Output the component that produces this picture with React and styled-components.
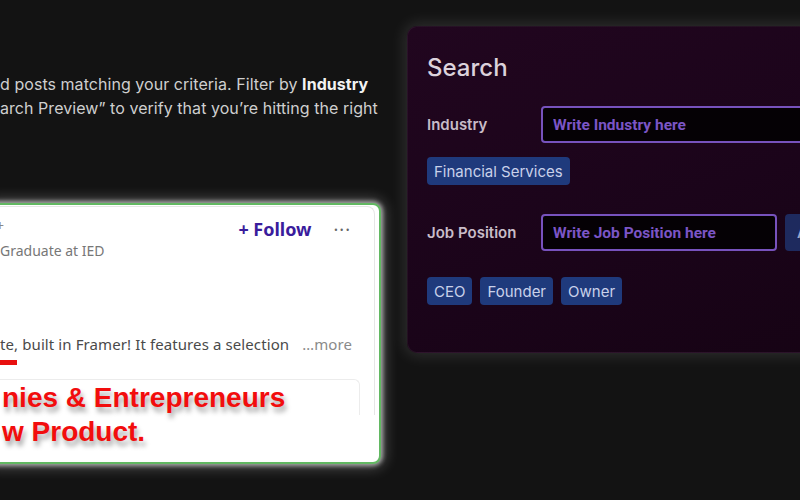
import React from 'react'
import styled, {createGlobalStyle} from 'styled-components'

const GlobalStyle = createGlobalStyle`
  html, body {
    margin: 0;
    padding: 0;
    background: #131313;
  }
  body {
    font-family: Inter, "Noto Sans", sans-serif;
  }
`

export default function App() {
  const industries = ['Financial Services']
  const positions = ['CEO', 'Founder', 'Owner']

  return (
    <Page>
      <GlobalStyle />
      <LeftColumn>
        <Intro>
          <span>d posts matching your criteria. Filter by <b>Industry</b></span>
          <span>arch Preview” to verify that you’re hitting the right</span>
        </Intro>

        <Card>
          <Post>
            <PostHeader>
              <Author>
                <div className='name'>+</div>
                <div className='headline'>Graduate at IED</div>
              </Author>
              <Actions>
                <FollowButton>+ Follow</FollowButton>
                <MoreDots>···</MoreDots>
              </Actions>
            </PostHeader>
            <PostBody>
              <span>te, built in Framer! It features a selection</span>
              <span className='more'>…more</span>
            </PostBody>
            <Underline />
            <Preview />
          </Post>
          <Callout>
            <div>nies &amp; Entrepreneurs</div>
            <div>w Product.</div>
          </Callout>
        </Card>
      </LeftColumn>

      <Panel>
        <PanelTitle>Search</PanelTitle>
        <FieldRow>
          <Label>Industry</Label>
          <TextInput placeholder='Write Industry here' />
        </FieldRow>
        <ChipList>
          {industries.map(item => <Chip key={item}>{item}</Chip>)}
        </ChipList>

        <FieldRow $gap={29}>
          <Label>Job Position</Label>
          <TextInput $width={236} placeholder='Write Job Position here' />
          <AddButton>Add</AddButton>
        </FieldRow>
        <ChipList $gap={26}>
          {positions.map(item => <Chip key={item}>{item}</Chip>)}
        </ChipList>
      </Panel>
    </Page>
  )
}

const Page = styled.div`
  display: flex;
  align-items: flex-start;
  gap: 26px;
  width: 800px;
  height: 500px;
  overflow: hidden;
`

const LeftColumn = styled.div`
  flex: 0 0 381px;
  display: flex;
  flex-direction: column;
  padding-top: 72px;
`

const Intro = styled.p`
  margin: 0;
  display: flex;
  flex-direction: column;
  font-size: 16px;
  line-height: 24px;
  color: #cfcfcf;
  white-space: nowrap;
  letter-spacing: 0.05px;
  b {
    color: #f2f2f2;
    font-weight: 700;
  }
`

const Card = styled.div`
  position: relative;
  margin-top: 83px;
  margin-left: -12px;
  height: 256px;
  border: 2px solid #62b862;
  border-radius: 8px;
  background: #fff;
  box-shadow: 0 0 4px 2px rgba(255, 255, 255, 0.55), 0 0 14px 4px rgba(255, 255, 255, 0.25);
  padding: 1px 4px 0 0;
  display: flex;
  flex-direction: column;
`

const Post = styled.div`
  height: 208px;
  display: flex;
  flex-direction: column;
  padding-left: 10px;
  border-top: 1px solid #e6e6e6;
  border-right: 1px solid #e6e6e6;
  border-top-right-radius: 8px;
  font-family: "Noto Sans", "Open Sans", sans-serif;
`

const PostHeader = styled.div`
  display: flex;
  justify-content: space-between;
  align-items: flex-start;
  padding: 9px 23px 0 0;
`

const Author = styled.div`
  display: flex;
  flex-direction: column;
  gap: 5px;
  font-size: 14px;
  line-height: 20px;
  color: #777;
  .name {
    color: #888;
    margin-left: -4px;
  }
`

const Actions = styled.div`
  display: flex;
  align-items: center;
  gap: 22px;
  margin-top: 1px;
`

const FollowButton = styled.div`
  font-size: 18px;
  line-height: 24px;
  font-weight: 700;
  color: #3a1c9c;
`

const MoreDots = styled.div`
  font-size: 18px;
  line-height: 24px;
  color: #666;
  letter-spacing: 1px;
`

const PostBody = styled.div`
  display: flex;
  justify-content: space-between;
  margin-top: 72px;
  padding-right: 22px;
  font-size: 15px;
  line-height: 22px;
  color: #4a4a4a;
  white-space: nowrap;
  letter-spacing: 0.1px;
  .more {
    color: #8a8a8a;
  }
`

const Underline = styled.div`
  margin-top: 5px;
  width: 17px;
  height: 5px;
  background: #e8100f;
`

const Preview = styled.div`
  flex: 1;
  margin: 14px 14px 0 -10px;
  border-top: 1px solid #ececec;
  border-right: 1px solid #ececec;
  border-top-right-radius: 6px;
`

const Callout = styled.div`
  position: absolute;
  left: 12px;
  top: 176px;
  font-family: "Liberation Sans", Arial, sans-serif;
  font-size: 28px;
  line-height: 34px;
  font-weight: 700;
  color: #f20d0d;
  white-space: nowrap;
  text-shadow: 2px 5px 5px rgba(0, 0, 0, 0.35);
`

const Panel = styled.div`
  flex: 0 0 460px;
  box-sizing: border-box;
  height: 327px;
  margin-top: 26px;
  padding: 26px 20px 0 19px;
  border-radius: 10px;
  border: 1px solid rgba(255, 255, 255, 0.06);
  background: linear-gradient(160deg, #21061f 0%, #1b041a 55%, #160314 100%);
  box-shadow: 0 0 16px 2px rgba(255, 255, 255, 0.13);
  display: flex;
  flex-direction: column;
`

const PanelTitle = styled.h2`
  margin: 0;
  font-size: 24px;
  line-height: 30px;
  font-weight: 500;
  color: #dcd2dc;
`

const FieldRow = styled.div`
  display: flex;
  align-items: center;
  gap: 8px;
  margin-top: ${p => p.$gap ?? 23}px;
`

const Label = styled.label`
  flex: 0 0 106px;
  font-size: 15px;
  font-weight: 600;
  color: #c8bcc8;
`

const TextInput = styled.input`
  box-sizing: border-box;
  ${p => p.$width ? `flex: 0 0 ${p.$width}px;` : 'flex: 1;'}
  min-width: 0;
  height: 37px;
  padding: 0 10px;
  border: 2px solid #7752bd;
  border-radius: 4px;
  background: #050105;
  font-family: Roboto, Inter, sans-serif;
  font-size: 15.5px;
  font-weight: 700;
  color: #8a63d2;
  outline: none;
  &::placeholder {
    color: #7b55c6;
  }
`

const AddButton = styled.button`
  flex: 1;
  height: 37px;
  padding: 0 12px;
  text-align: left;
  border: none;
  border-radius: 4px;
  background: #1e2a5e;
  font-family: Inter, sans-serif;
  font-size: 15px;
  font-weight: 600;
  color: #9aa6cf;
`

const ChipList = styled.div`
  display: flex;
  gap: 8px;
  margin-top: ${p => p.$gap ?? 14}px;
`

const Chip = styled.span`
  height: 28px;
  display: inline-flex;
  align-items: center;
  padding: 0 7px;
  border-radius: 4px;
  background: #1f3a7c;
  font-size: 15px;
  color: #c9d1ea;
`
